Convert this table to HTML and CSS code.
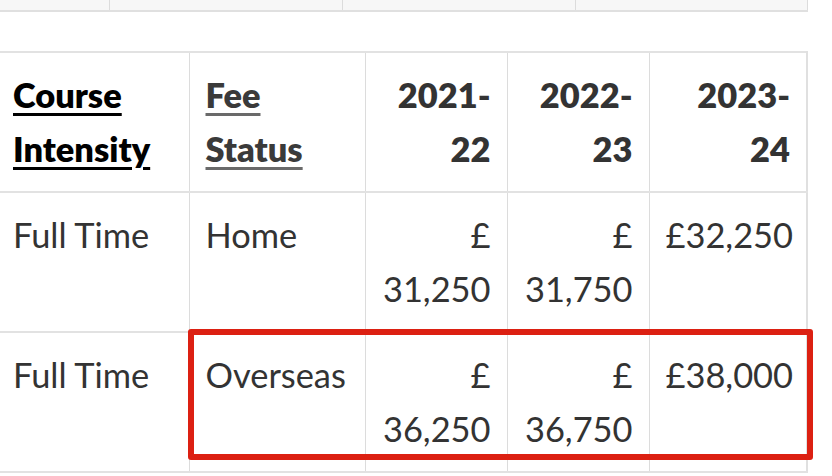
FILE: index.html
```html
<!DOCTYPE html>
<html lang="en">
<head>
<meta charset="utf-8">
<title>Fees</title>
<link rel="stylesheet" href="styles.css">
</head>
<body>
<div class="page">
  <table class="prev">
    <colgroup><col class="p1"><col class="p2"><col class="p3"><col class="p4"></colgroup>
    <tr><td></td><td></td><td></td><td></td></tr>
  </table>

  <div class="fees-wrap">
    <table class="fees">
      <colgroup><col class="c1"><col class="c2"><col class="c3"><col class="c4"><col class="c5"></colgroup>
      <thead>
        <tr>
          <th class="left"><a class="sort active" href="#">Course Intensity</a></th>
          <th class="left"><a class="sort" href="#">Fee Status</a></th>
          <th>2021-22</th>
          <th>2022-23</th>
          <th>2023-24</th>
        </tr>
      </thead>
      <tbody>
        <tr>
          <td class="left">Full Time</td>
          <td class="left">Home</td>
          <td>£ 31,250</td>
          <td>£ 31,750</td>
          <td>£32,250</td>
        </tr>
        <tr>
          <td class="left">Full Time</td>
          <td class="left">Overseas</td>
          <td>£ 36,250</td>
          <td>£ 36,750</td>
          <td>£38,000</td>
        </tr>
      </tbody>
    </table>
    <div class="highlight"></div>
  </div>
</div>
</body>
</html>
```

FILE: styles.css
```css
html, body {
  margin: 0;
  padding: 0;
  background: #fff;
}

.page {
  margin-left: -3px;
  font-family: Lato, "Open Sans", sans-serif;
  font-size: 34.4px;
  line-height: 54px;
  color: #333;
}

table {
  border-collapse: collapse;
  table-layout: fixed;
}

.prev {
  width: 810px;
}
.prev .p1 { width: 112px; }
.prev .p2 { width: 233px; }
.prev .p3 { width: 233px; }
.prev .p4 { width: 232px; }
.prev td {
  height: 10px;
  padding: 0;
  background: #f7f7f7;
  border-right: 1px solid #dcdcdc;
  border-bottom: 2px solid #e0e0e0;
}

.fees-wrap {
  position: relative;
  margin-top: 39px;
}

.fees {
  width: 810px;
  border-top: 2px solid #e2e2e2;
}
.fees .c1 { width: 192px; }
.fees .c2 { width: 176px; }
.fees .c3 { width: 142px; }
.fees .c4 { width: 142px; }
.fees .c5 { width: 158px; }

.fees th,
.fees td {
  padding: 15px 16px 15px;
  text-align: right;
  vertical-align: top;
  border-right: 1px solid #dcdcdc;
  border-bottom: 2px solid #e2e2e2;
}
.fees th:last-child,
.fees td:last-child {
  border-right: 2px solid #e0e0e0;
}
.fees th {
  font-weight: 800;
}
.fees .left {
  text-align: left;
}

.sort {
  color: #3a3a3a;
  text-decoration: underline;
  text-decoration-color: #6a6a6a;
  text-decoration-thickness: 3px;
  text-underline-offset: 5px;
}
.sort.active {
  color: #000;
  text-decoration-color: #000;
}

.highlight {
  position: absolute;
  left: 191px;
  top: 278px;
  width: 613px;
  height: 119px;
  border: 6px solid #dc2012;
  border-radius: 3px;
}
```
